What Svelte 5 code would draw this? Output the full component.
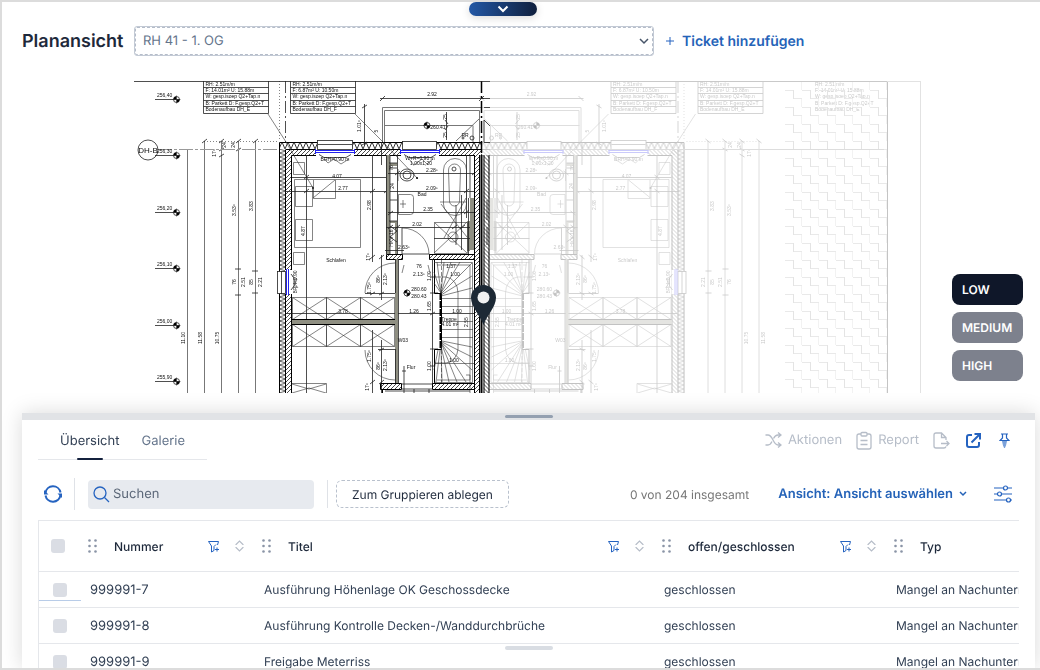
<script lang="ts">
  interface Ticket { id: string; title: string; status: string; type: string; }
  interface Label { x: number; y: number; t: string; v?: boolean; }

  const tickets: Ticket[] = [
    { id: '999991-7', title: 'Ausführung Höhenlage OK Geschossdecke', status: 'geschlossen', type: 'Mangel an Nachunternehmer' },
    { id: '999991-8', title: 'Ausführung Kontrolle Decken-/Wanddurchbrüche', status: 'geschlossen', type: 'Mangel an Nachunternehmer' },
    { id: '999991-9', title: 'Freigabe Meterriss', status: 'geschlossen', type: 'Mangel an Nachunternehmer' },
  ];

  const columns = [
    { key: 'id', label: 'Nummer' },
    { key: 'title', label: 'Titel' },
    { key: 'status', label: 'offen/geschlossen' },
    { key: 'type', label: 'Typ' },
  ];

  const qualities = ['LOW', 'MEDIUM', 'HIGH'];

  let quality = $state('LOW');
  let search = $state('');
  let tab = $state('Übersicht');

  // the two houses mirror each other along the party wall
  const AXIS = 963.5;

  const levels = [
    { y: 99, t: '256,40' }, { y: 155, t: '256,30' }, { y: 212, t: '256,20' },
    { y: 268, t: '256,10' }, { y: 325, t: '256,00' }, { y: 381, t: '255,90' },
  ];

  const labels: Label[] = [
    { x: 343, y: 190, t: '2.77' }, { x: 337, y: 178, t: '4.07' }, { x: 336, y: 262, t: 'Schlafen' },
    { x: 432, y: 172, t: '2.28⁵' }, { x: 432, y: 190, t: '2.09⁵' }, { x: 422, y: 196, t: 'Bad' },
    { x: 428, y: 211, t: '2.35' }, { x: 417, y: 226, t: '2.02' }, { x: 404, y: 249, t: '2.63⁵' },
    { x: 419, y: 268, t: '76' }, { x: 419, y: 276, t: '2.13⁵' }, { x: 451, y: 268, t: '1.37' },
    { x: 455, y: 276, t: '1.00' }, { x: 419, y: 291, t: '280.60' }, { x: 419, y: 298, t: '280.43' },
    { x: 414, y: 313, t: '1.26' }, { x: 343, y: 313, t: '3.78' }, { x: 457, y: 313, t: '1.00' },
    { x: 449, y: 321, t: 'Treppe' }, { x: 450, y: 326, t: '4.01 m²' }, { x: 403, y: 342, t: 'W03' },
    { x: 411, y: 369, t: 'Flur' }, { x: 454, y: 362, t: '1.00' }, { x: 335, y: 161, t: 'BRH=0.90 m' },
    { x: 420, y: 160, t: 'W+R=0.90 m' }, { x: 421, y: 165, t: '1,00x1,20' },
    { x: 438, y: 129, t: '260.41' }, { x: 432, y: 96, t: '2.92' }, { x: 465, y: 137, t: 'RR' },
    { x: 305, y: 231, t: '4.87', v: true }, { x: 371, y: 205, t: '2.98', v: true },
    { x: 361, y: 126, t: '1.01⁵', v: true }, { x: 378, y: 131, t: '5', v: true },
    { x: 393, y: 168, t: '76', v: true }, { x: 394, y: 186, t: '24', v: true }, { x: 393, y: 238, t: 'HKV 16', v: true },
    { x: 370, y: 257, t: '17⁵', v: true }, { x: 380, y: 279, t: '86⁵', v: true }, { x: 387, y: 279, t: '2.13⁵', v: true },
    { x: 371, y: 288, t: '1.75⁵', v: true }, { x: 431, y: 306, t: '1.65', v: true }, { x: 431, y: 276, t: '1.00', v: true },
    { x: 468, y: 322, t: '2.55', v: true }, { x: 371, y: 356, t: '1.75⁵', v: true }, { x: 380, y: 366, t: '86⁵', v: true },
    { x: 387, y: 365, t: '2.13⁵', v: true }, { x: 431, y: 366, t: '1.00', v: true }, { x: 369, y: 387, t: '17⁵', v: true },
    { x: 447, y: 117, t: '25', v: true }, { x: 447, y: 135, t: '25', v: true }, { x: 297, y: 282, t: 'BRH=0.90', v: true },
    { x: 235, y: 145, t: '24', v: true }, { x: 216, y: 153, t: '17⁵', v: true }, { x: 236, y: 210, t: '3.53⁵', v: true },
    { x: 253, y: 206, t: '3.83', v: true }, { x: 236, y: 282, t: '76', v: true }, { x: 245, y: 282, t: '2.51', v: true },
    { x: 253, y: 282, t: '85', v: true }, { x: 262, y: 282, t: '2.21', v: true }, { x: 185, y: 338, t: '11.10', v: true },
    { x: 202, y: 338, t: '11.58', v: true }, { x: 219, y: 338, t: '10.75', v: true }, { x: 226, y: 145, t: '24', v: true },
  ];

  const rightLabels = labels.filter(l => l.x > 200 && l.t !== '11.10').map(l => ({ ...l, x: AXIS - l.x + (l.v ? 3 : 0) }));
</script>

{#snippet caption(l: Label)}
  <text x={l.x} y={l.y} text-anchor="middle" transform={l.v ? `rotate(-90 ${l.x} ${l.y})` : undefined}>{l.t}</text>
{/snippet}

{#snippet infoBox(x: number, name: string, area: string, framed: boolean)}
  {#if framed}
    <path class="ln" d="M{x} 81V113.500H{x + 65}V81M{x} 87.500h65M{x} 93.500h65M{x} 100.500h65M{x} 106.500h65" />
  {/if}
  <text x={x + 2} y="86">RH: 2.51m/m</text>
  <text x={x + 2} y="92">{area}</text>
  <text x={x + 2} y="98">W: gesp.isoep Q2+Tap.n</text>
  <text x={x + 2} y="105">B: Parkett D: F.gesp.Q2+T</text>
  <text x={x + 2} y="111">Bodenaufbau {name}</text>
{/snippet}

{#snippet levelMark(x: number, y: number)}
  <circle class="ln" cx={x} cy={y} r="3" />
  <path d="M{x} {y}h-3a3 3 0 0 1 3 -3zM{x} {y}h3a3 3 0 0 1 -3 3z" />
  <path class="thin" d="M{x} {y - 4}v8M{x - 4} {y}h8" />
{/snippet}

{#snippet partyWall()}
  <rect x="474" y="155" width="7" height="238" fill="#fff" />
  <rect x="474" y="155" width="6" height="238" fill="url(#brick)" />
  <path class="wall" d="M474.500 155V393M479.500 155V393" />
{/snippet}

{#snippet house()}
  <!-- outer dimension chains -->
  <path class="dim" d="M204.500 141V393M221.500 141V393M238.500 141V393M255.500 141V393" />
  <path class="thin" stroke-dasharray="1 2" d="M204 141.500H279M279.500 81V141" />
  <path class="ln" d="M202 143l5-4M219 143l5-4M236 143l5-4M253 143l5-4M219 151l5-3M236 151l5-3M219 157l5-3M235 269h6M235 295h6M252 271h6M252 293h6" />
  <!-- outer walls -->
  <rect x="279" y="142" width="203" height="7" fill="url(#insulTop)" />
  <rect x="279" y="149" width="7" height="244" fill="url(#insulSide)" />
  <rect x="286" y="149" width="196" height="6" fill="url(#brick)" />
  <rect x="286" y="149" width="6" height="244" fill="url(#brick)" />
  <path class="wall" d="M279.500 393V142.500H482M285.500 393V149.500M291.500 393V155.500H482M286 149.500H482" />
  <path class="ln" stroke-dasharray="12 3 2 3" d="M285.500 81V142" />
  <!-- windows -->
  <g class="win">
    <path d="M316 149h38v7h-38zM401 149h38v7h-38zM285 270h7v24h-7z" stroke="none" />
    <rect x="317.500" y="140.500" width="35" height="9" /><rect x="402.500" y="141.500" width="34" height="8" />
    <rect x="277.500" y="271.500" width="8" height="22" />
    <path d="M318 144.500h34M319 154.500l5 3h22l5-3M404 154.500l5 3h22l5-3M281.500 271v23M291 274l3 4v8l-3 4" fill="none" />
  </g>
  <path class="thin" d="M324 159l4 4 6-4 7 5 8-5M409 159l5 6 8-6 5 5 6-5M292 276l5 3-2 5 3 4" />
  <path class="blue" d="M315 150.500h40M315 152.500h40M400 150.500h40M400 152.500h40M286.500 269v26M288.500 269v26M315.500 149v5M354.500 149v5M400.500 149v5M439.500 149v5" />
  <!-- balcony -->
  <path class="dim" d="M382.500 142V107.500H482M384.500 142V110.500H479.500V142M384 125.500H473V142M456 141L479 119" />
  <path class="ln" d="M380 98.500H484M380 101l5-5M479 101l5-5M364.500 104V145M362 108l5-3M362 145l5-3M446.500 112V140M445 120l3 4M445 130l3-4" />
  <circle class="ln" cx="472" cy="138" r="2" /><circle class="ln" cx="463" cy="138" r="1" />
  {@render levelMark(427, 125.5)}
  <path class="thin" d="M355 114L383 142L418 179" /><path class="thin" d="M268 114L286 142L313 188" />
  <circle cx="313" cy="188" r="1" /><circle cx="417" cy="178" r="1" />
  <!-- bedroom -->
  <path class="thin" d="M294.500 179.500H360.500V247.500H294.500zM295.500 186.500h17v20h-17zM295.500 219.500h17v21h-17zM313.500 180V198.500H335.500V180M313 198L335 180M293.500 162.500h11v12h-11zM293.500 252.500h11v12h-11z" />
  <path class="ln" d="M292 177.500H388M285 191.500H474M306.500 155V393M372.500 155V262M372.500 330V393M381.500 142V165M381.500 255V300M381.500 340V393" />
  <path class="ln" d="M304 179l5-4M304 193l5-4M370 193l5-4M384 193l5-4M379 259l5-4M370 259l5-4M379 295l5-3M370 384l5-4M379 351l5-3M379 384l5-4" />
  <!-- wardrobes -->
  {#each [297.5, 324.5] as y}
    {#each [292.5, 326.5, 360.5] as x}
      <path class="thin" d="M{x} {y}h34v22h-34zl34 22M{x + 34} {y}l-34 22" />
    {/each}
  {/each}
  <path class="thin" d="M292 383.500H326.500V393M292 384l17 5 17-5M292 393l17-5 17 5" />
  <rect x="292" y="320" width="104" height="4" class="core" />
  <path class="wall" d="M292 319.500H396M292 324.500H396" />
  <path class="ln" d="M286 313.500H474" />
  <!-- bathroom -->
  <rect x="386" y="155" width="4" height="99" class="core" /><rect x="388" y="221" width="9" height="2" class="core" />
  <rect x="395" y="223" width="2" height="31" class="core" /><rect x="389" y="163" width="8" height="3" class="core" />
  <rect x="470" y="198" width="4" height="52" class="core" /><rect x="467" y="221" width="3" height="30" class="core" />
  <path class="ln" d="M386.500 155V254M397.500 155V254M390 155V254M389 163h8M389 221h8M390 168h7M390 200h7M468.500 198V254M470 155V198M466.500 155V218M390 226l7 5-7 6 7 5" />
  <path class="thin" d="M443.500 170a11 11 0 0 1 23 0v34a11 11 0 0 1-23 0zM448.500 170a6 6 0 0 1 12 0l-1 31a5 5 0 0 1-10 0zM398 169v12M398.500 194.500h12q3 0 3 3v14q0 3-3 3h-12zM400 204h6M403 200v8M440 202h26" />
  <circle class="ln" cx="454" cy="169" r="2" />
  <ellipse class="ln" cx="407" cy="175" rx="7" ry="6" /><ellipse class="ln" cx="407" cy="175" rx="4" ry="4" />
  <path class="thin" d="M434.500 222.500H467.500V253.500H434.500zL467 253M434 253L467 222M402 228A27 26 0 0 1 429 254M441 204l14 18 12 15M466 198l-22 40" />
  <circle class="thin" cx="453" cy="237" r="5" />
  <path class="ln" d="M388 173.500H474M388 212.500H474M386 227.500H470M434 238.500h36M402 228V254M461.500 195V250M456 205V245M385 250.500H404" />
  <path class="ln" d="M388 215l5-4M388 229l5-4M395 175l5-4M472 175l5-4M464 193l5-4M464 214l5-4M452 229l5-4M460 229l5-4M395 229l5-4" />
  <rect x="386" y="254" width="16" height="5" fill="url(#brick)" /><rect x="429" y="254" width="46" height="5" fill="url(#brick)" />
  <path class="wall" d="M386.500 254.500H402.500V259.500H386.500zM475 254.500H429.500V259.500H475" />
  <!-- hall -->
  <rect x="395" y="259" width="3" height="125" class="core" />
  <path class="ln" d="M398.500 259V384M395.500 259V293M395.500 349V384M365 293.500h30M378 349.500h17M432.500 259V384M402 254h27M404 366v27M402 371h4" />
  <path class="thin" d="M365 293A30 30 0 0 1 395 263M365 350A30 30 0 0 0 395 380M404 265l-2 8M428 265l2 8" />
  <path class="ln" d="M430 277h5M430 293h8M430 349h8M430 366h5M370 295l5-3M430 315l5-3" />
  {@render levelMark(407, 293)}
  <!-- stairs -->
  <path class="wall" d="M434.500 260V293.500H441.500V349.500H434.500V383" /><path class="post" d="M440.500 293V350" />
  <path class="thin" d="M434 262.500H472.500V382.500H434M437 265H470V380H437M441 293L434 283M441 293L434 272M441 293L437 262M441 293L444 262M441 293L451 262M441 293L460 262M441 294L472 263M441 295L472 276M441 296L472 288M442 298.500L472 298.500M442 306.500h31M442 321.500h31M442 329.500h31M442 337.500h31M442 341L472 347M442 342L472 357M442 343L472 370M442 344L466 382M442 345L457 382M441 346L449 382M441 348L442 382M440 350L436 382M438 350L434 370" />
  <path class="thin" stroke-dasharray="4 2" d="M441.500 260V293M441.500 350V383" />
  <path class="thin" d="M434 277H446A13 16 0 0 1 458 293V349A13 15 0 0 1 446 363H434M434 363.500H474M466 375h4v18" />
  <!-- lower walls -->
  <rect x="380" y="384" width="22" height="5" fill="url(#brick)" /><rect x="432" y="384" width="43" height="5" fill="url(#brick)" />
  <path class="wall" d="M382.500 393V389.500H380.500V383.500H401.500V389.500H382M475 383.500H432.500V389.500H475" />
  <path class="ln" d="M402 384h30M402 389h30M385 391H470M414 389v4M429 389v4" />
{/snippet}

{#snippet funnel()}
  <svg width="13" height="13" viewBox="0 0 13 13" fill="none" stroke="#2563c0"><path d="M10.500 5L11.500 1.500H1.500L4.500 6v6l2.500-1.500V6.500l2-2M10 7.500v4M8 9.500h4" /></svg>
{/snippet}

<div class="app">
  <button class="expander" aria-label="Kopfzeile ausklappen">
    <svg width="12" height="8" viewBox="0 0 12 8" fill="none" stroke="#fff" stroke-width="2"><path d="M1.500 1.500L6 6l4.500-4.500" /></svg>
  </button>

  <header class="top">
    <h1>Planansicht</h1>
    <div class="plan-select">
      <select aria-label="Plan"><option>RH 41 - 1. OG</option></select>
      <svg width="10" height="7" viewBox="0 0 10 7" fill="none" stroke="#475569" stroke-width="1.500"><path d="M1 1l4 4 4-4" /></svg>
    </div>
    <button class="add-ticket">
      <svg width="8" height="8" viewBox="0 0 8 8" stroke="#2563c0"><path d="M4 0v8M0 4h8" /></svg>
      Ticket hinzufügen
    </button>
  </header>

  <main class="viewer">
    <svg class="plan" width="788" height="312" viewBox="134 81 788 312" role="img" aria-label="Grundriss RH 41 - 1. OG">
      <defs>
        <pattern id="brick" width="4" height="4" patternUnits="userSpaceOnUse"><path d="M-1 5L5 -1M-1 1L1 -1M3 5L5 3" stroke="#000" stroke-width="0.700" /></pattern>
        <pattern id="insulTop" x="279" y="142" width="6" height="7" patternUnits="userSpaceOnUse"><path d="M0 7L3 0L6 7" fill="none" stroke="#000" stroke-width="0.800" /></pattern>
        <pattern id="insulSide" x="279" y="149" width="7" height="4" patternUnits="userSpaceOnUse"><path d="M0 0L7 2L0 4" fill="none" stroke="#000" stroke-width="0.600" /></pattern>
        <pattern id="paving" x="785" y="90" width="17" height="17" patternUnits="userSpaceOnUse"><path d="M0 .5H8.500M8.500 8.500H17" stroke="#e9e9e9" /><path d="M8.500 0V9" stroke="#e4e4e4" /><path d="M16.500 9V17" stroke="#f2f2f2" /></pattern>
      </defs>

      <g class="faded">
        <g transform="translate({AXIS} 0) scale(-1 1)">{@render house()}</g>
        {#each rightLabels as l}{@render caption(l)}{/each}
        {@render infoBox(611, 'DH_F', 'F: 6.87m² U: 10.50m', true)}
        {@render infoBox(698, 'DH_E', 'F: 14.01m² U: 15.88m', true)}
        {@render infoBox(813, 'DH_E', 'F: 14.01m² U: 15.88m', false)}
      </g>
      <rect x="785" y="81" width="102" height="312" fill="url(#paving)" />
      <path d="M887.500 81V393" stroke="#c4c4c4" />
      <path d="M920.500 81V393M887 81.500H921" stroke="#e2e2e2" />
      <path d="M490 81.500H887" stroke="#c9c9c9" />
      <path d="M490 149.500H884" stroke="#ddd" />

      {@render house()}
      {@render partyWall()}
      <g transform="translate({AXIS} 0) scale(-1 1)">{@render partyWall()}</g>
      <path d="M481.500 155V393" stroke="#000" stroke-width="2" />
      <path d="M481.500 81V155" stroke="#000" stroke-width="1.500" stroke-dasharray="12 3 2 3" />
      <path class="ln" d="M484 142v-22l6 6M484 107.500h6M484 142.500h6M487 200v20M487 227v18M482 98.500h8" />
      {#each labels as l}{@render caption(l)}{/each}
      {@render infoBox(203.5, 'DH_E', 'F: 14.01m² U: 15.88m', true)}
      {@render infoBox(290.5, 'DH_F', 'F: 6.87m² U: 10.50m', true)}
      <path class="ln" d="M134 81.500H490" />
      <path class="dim" d="M187.500 149V393" />
      <path d="M158 149.500H279" stroke="#999" stroke-dasharray="14 2 3 2" />
      <circle class="ln" cx="148" cy="150" r="10" />
      <text class="axis" x="148" y="153" text-anchor="middle">DH-B</text>
      {#each levels as level}
        <text x="157" y={level.y - 2}>{level.t}</text>
        <path class="ln" d="M155 {level.y + .5}H180" />
        {@render levelMark(176.5, level.y + .5)}
      {/each}

      <path d="M483.500 325C480 315 471 307 471 297.500a12.500 12.500 0 0 1 25 0C496 307 487 315 483.500 325z" fill="#1d2935" />
      <circle cx="483.500" cy="297.500" r="6" fill="#f1f1f1" />
    </svg>

    <div class="quality">
      {#each qualities as q}
        <button class:active={quality === q} onclick={() => quality = q}>{q}</button>
      {/each}
    </div>
  </main>

  <section class="panel">
    <div class="resize"><span></span></div>

    <div class="panel-head">
      <nav class="tabs">
        {#each ['Übersicht', 'Galerie'] as name}
          <button class:active={tab === name} onclick={() => tab = name}>{name}</button>
        {/each}
      </nav>
      <div class="actions">
        <button disabled>
          <svg width="17" height="16" viewBox="0 0 17 16" fill="none" stroke="currentColor" stroke-width="1.300"><path d="M.5 3h2.500c5 0 5 10 10 10h3M.5 13h2.500c2 0 3-1.500 4-3.500M8.500 6.500C9.500 4.500 10.500 3 13 3h3M13 .5L16 3l-3 2.500M13 10.500l3 2.500-3 2.500" /></svg>
          Aktionen
        </button>
        <button disabled>
          <svg width="16" height="19" viewBox="0 0 16 19" fill="none" stroke="currentColor" stroke-width="1.300"><path d="M5 3H3Q1 3 1 5v11q0 2 2 2h10q2 0 2-2V5q0-2-2-2h-2M4.500 9.500h7M4.500 13.500h7" /><rect x="5" y="1.500" width="6" height="3.500" rx="1" /></svg>
          Report
        </button>
        <button disabled aria-label="Exportieren">
          <svg width="17" height="17" viewBox="0 0 17 17" fill="none" stroke="currentColor" stroke-width="1.300"><path d="M13 8V5.500L8.500 1H3Q1 1 1 3v11q0 2 2 2h8q1.500 0 2-1.500M8.500 1v4.500H13M8 11.500h8M13.500 9l2.500 2.500-2.500 2.500" /></svg>
        </button>
        <button class="blue-icon" aria-label="In neuem Fenster öffnen">
          <svg width="15" height="15" viewBox="0 0 15 15" fill="none" stroke="currentColor" stroke-width="2"><path d="M6 2H3Q1 2 1 4v8q0 2 2 2h8q2 0 2-2V9M5.500 9.500L13 2M8.500 1H14v5.500" /></svg>
        </button>
        <button class="blue-icon" aria-label="Anheften">
          <svg width="11" height="15" viewBox="0 0 11 15" fill="none" stroke="currentColor" stroke-width="1.200"><path d="M2 1h7M3.500 1v4L1 7.500h9L7.500 5V1" /><path d="M3.500 7.500h4L6.500 12 5.500 14.500 4.500 12z" fill="currentColor" opacity=".6" /></svg>
        </button>
      </div>
    </div>

    <div class="toolbar">
      <button class="refresh" aria-label="Aktualisieren">
        <svg width="18" height="18" viewBox="0 0 18 18" fill="none" stroke="#2563c0" stroke-width="2"><path d="M1.500 8a7.600 7.600 0 0 1 15-.5M16.500 10a7.600 7.600 0 0 1-15 .5" /><path d="M0 5v4.500h4.500zM18 13V8.500h-4.500z" fill="#2563c0" stroke="none" /></svg>
      </button>
      <label class="search">
        <svg width="17" height="17" viewBox="0 0 17 17" fill="none" stroke="#2563c0" stroke-width="1.300"><circle cx="7" cy="7" r="6" /><path d="M11.500 11.500L16 16" /></svg>
        <input type="text" placeholder="Suchen" aria-label="Suchen" bind:value={search} />
      </label>
      <div class="group-zone"><button>Zum Gruppieren ablegen</button></div>
      <span class="count">0 von 204 insgesamt</span>
      <button class="view-select">
        Ansicht: Ansicht auswählen
        <svg width="8" height="6" viewBox="0 0 8 6" fill="none" stroke="currentColor" stroke-width="1.500"><path d="M1 1l3 3 3-3" /></svg>
      </button>
      <button class="settings" aria-label="Spalten einstellen">
        <svg width="18" height="18" viewBox="0 0 18 18" fill="#fff" stroke="#2563c0" stroke-width="1.200"><path d="M0 3h18M0 9h18M0 15h18" /><circle cx="11.500" cy="3" r="2" /><circle cx="5.500" cy="9" r="2" /><circle cx="14.500" cy="15" r="2" /></svg>
      </button>
    </div>

    <div class="table-wrap">
      <table>
        <colgroup><col class="c-check" /><col class="c-id" /><col class="c-title" /><col class="c-status" /><col class="c-type" /></colgroup>
        <thead>
          <tr>
            <th class="check"><input type="checkbox" aria-label="Alle auswählen" /></th>
            {#each columns as col (col.key)}
              <th class="col">
                <div class="th">
                  <svg width="9" height="14" viewBox="0 0 9 14" fill="#8a94a6"><circle cx="1.500" cy="1.500" r="1.300" /><circle cx="7.500" cy="1.500" r="1.300" /><circle cx="1.500" cy="7" r="1.300" /><circle cx="7.500" cy="7" r="1.300" /><circle cx="1.500" cy="12.500" r="1.300" /><circle cx="7.500" cy="12.500" r="1.300" /></svg>
                  <span class="th-label">{col.label}</span>
                  <button aria-label="{col.label} filtern">{@render funnel()}</button>
                  <button aria-label="{col.label} sortieren">
                    <svg width="9" height="12" viewBox="0 0 9 12" fill="none" stroke="#b6bdc8" stroke-width="1.200"><path d="M1 5V4.500L4.500 1 8 4.500V5M1 7v.5L4.500 11 8 7.500V7" /></svg>
                  </button>
                </div>
              </th>
            {/each}
          </tr>
        </thead>
        <tbody>
          {#each tickets as ticket (ticket.id)}
            <tr>
              <td class="check"><input type="checkbox" aria-label="{ticket.id} auswählen" /></td>
              <td class="number">{ticket.id}</td>
              <td>{ticket.title}</td>
              <td>{ticket.status}</td>
              <td>{ticket.type}</td>
            </tr>
          {/each}
        </tbody>
      </table>
    </div>
    <span class="bottom-handle"></span>
  </section>
</div>

<style>
  :global(body) { margin: 0; background: #fff; }
  .app {
    position: relative; box-sizing: border-box; height: 100vh; overflow: hidden;
    display: flex; flex-direction: column; background: #fff;
    border: 2px solid #dcdcdc; border-right: none;
    font-family: Inter, sans-serif; font-size: 13px; color: #334155;
    text-rendering: geometricPrecision;
  }
  button, input, select { font: inherit; color: inherit; text-rendering: inherit; }
  button { display: flex; align-items: center; padding: 0; border: none; background: none; cursor: pointer; }
  svg { display: block; flex: none; }

  .expander {
    position: absolute; top: 0; left: 45%; width: 68px; height: 14px; justify-content: center;
    border-radius: 7px; background: linear-gradient(90deg, #2257a5, #0f1f3d); box-shadow: 0 2px 8px rgba(0, 0, 0, 0.15);
  }
  .top { display: flex; align-items: center; height: 78px; padding-left: 20px; }
  .top h1 { margin: 0; width: 112px; font-size: 18px; font-weight: 600; color: #1e293b; }
  .plan-select { position: relative; flex: 0 1 520px; }
  .plan-select select {
    display: block; appearance: none; box-sizing: border-box; width: 100%; height: 30px; padding: 0 24px 0 8px;
    border: 1px solid #c3cad5; border-radius: 3px; outline: 1px dashed #b4bcc9; outline-offset: -2px;
    background: #fff; color: #64748b;
  }
  .plan-select svg { position: absolute; right: 5px; top: 12px; pointer-events: none; }
  .add-ticket { gap: 8px; margin-left: 12px; font-size: 14px; font-weight: 600; color: #2563b8; white-space: nowrap; }

  .viewer { position: relative; padding: 1px 0 20px 132px; }
  .plan text { font-family: "Liberation Sans", sans-serif; font-size: 5px; fill: #111; text-rendering: auto; }
  .plan text.axis { font-size: 8px; }
  .faded { opacity: 0.24; }
  .ln { fill: none; stroke: #222; stroke-width: 0.800; }
  .thin { fill: none; stroke: #333; stroke-width: 0.600; }
  .dim { fill: none; stroke: #777; }
  .wall { fill: none; stroke: #000; }
  .post { fill: none; stroke: #000; stroke-width: 2; stroke-dasharray: 7 1; }
  .core { fill: #8f8f82; }
  .win { fill: #fff; stroke: #222; stroke-width: 0.800; }
  .blue { fill: none; stroke: #2222ee; }

  .quality { position: absolute; right: 17px; bottom: 32px; display: flex; flex-direction: column; gap: 7px; min-width: 71px; }
  .quality button { height: 31px; padding: 0 10px; border-radius: 8px; background: #7d818d; color: #fff; font-size: 12px; font-weight: 600; }
  .quality button.active { background: #0f1729; }

  .panel {
    position: relative; flex: 1; min-height: 0; display: flex; flex-direction: column;
    margin: 0 5px 0 20px; background: #fff; box-shadow: 0 0 20px rgba(0, 0, 0, 0.15);
  }
  .resize { display: flex; justify-content: center; align-items: center; height: 7px; flex: none; background: #e1e3e6; }
  .resize span { width: 48px; height: 3px; border-radius: 2px; background: #94a0b0; }
  .panel-head { display: flex; justify-content: space-between; align-items: flex-start; flex: none; padding: 0 25px 0 16px; }
  .tabs { display: flex; gap: 22px; padding: 0 22px; border-bottom: 1px solid #e5e7eb; }
  .tabs button { position: relative; height: 39px; padding: 2px 0 0; color: #64748b; }
  .tabs button.active { color: #334155; }
  .tabs button.active::after {
    content: ''; position: absolute; left: 50%; bottom: -1px; width: 26px; height: 2px;
    margin-left: -13px; border-radius: 1px; background: #14213d;
  }
  .actions { display: flex; align-items: center; gap: 14px; height: 40px; }
  .actions button { gap: 6px; color: #b6bdc8; cursor: default; }
  .actions .blue-icon { color: #2563c0; margin-left: 2px; cursor: pointer; }
  .actions .blue-icon:last-child { margin-left: 4px; }

  .toolbar { display: flex; align-items: center; flex: none; height: 34px; padding: 17px 23px 9px 16px; }
  .refresh { height: 32px; padding: 0 12px 0 6px; border-right: 1px solid #dfe2e7; }
  .search {
    display: flex; align-items: center; gap: 3px; flex: 0 1 226px; min-width: 0; box-sizing: border-box; height: 29px;
    margin: 0 13px; padding: 0 5px; border-radius: 4px; background: #e7eaef;
  }
  .search input { flex: 1; width: 0; padding: 0; border: none; outline: none; background: none; }
  .search input::placeholder { color: #5b6778; opacity: 1; }
  .group-zone { padding-left: 8px; border-left: 1px solid #dfe2e7; }
  .group-zone button {
    height: 28px; padding: 0 15px; border: 1px dashed #b9c1cd; border-radius: 6px;
    font-size: 12px; color: #1e293b; white-space: nowrap;
  }
  .count { margin-left: auto; font-size: 12px; color: #777; white-space: nowrap; }
  .view-select { gap: 6px; margin: 0 27px 0 29px; font-weight: 600; color: #2563b8; white-space: nowrap; }

  .table-wrap { flex: 1; min-height: 0; overflow: hidden; margin: 0 16px; border-top: 1px solid #e5e7eb; border-left: 1px solid #e5e7eb; }
  table { width: 100%; min-width: 1050px; table-layout: fixed; border-collapse: collapse; font-size: 12px; }
  .c-check { width: 42px; }
  .c-id { width: 174px; }
  .c-title { width: 400px; }
  .c-status { width: 232px; }
  th, td { padding: 0 0 0 9px; border-bottom: 1px solid #e5e7eb; text-align: left; white-space: nowrap; }
  th { height: 50px; font-weight: 500; color: #1e293b; }
  th.col { padding-left: 7px; }
  td { height: 35px; }
  td.number { font-size: 13px; }
  .th { display: flex; align-items: center; gap: 15px; padding-right: 11px; }
  .th-label { flex: 1; padding-left: 2px; }
  .check { position: relative; padding-left: 14px; }
  th.check { padding-left: 12px; }
  .check input { display: block; appearance: none; width: 14px; height: 14px; margin: 0; border-radius: 3px; background: #dadde4; }
  tbody tr:first-child .check::after { content: ''; position: absolute; left: 0; right: 0; bottom: 6px; height: 1px; background: #b8cce8; }
  .bottom-handle { position: absolute; left: 50%; bottom: 18px; width: 48px; height: 4px; margin-left: -24px; border-radius: 2px; background: #d9dde3; }
</style>
